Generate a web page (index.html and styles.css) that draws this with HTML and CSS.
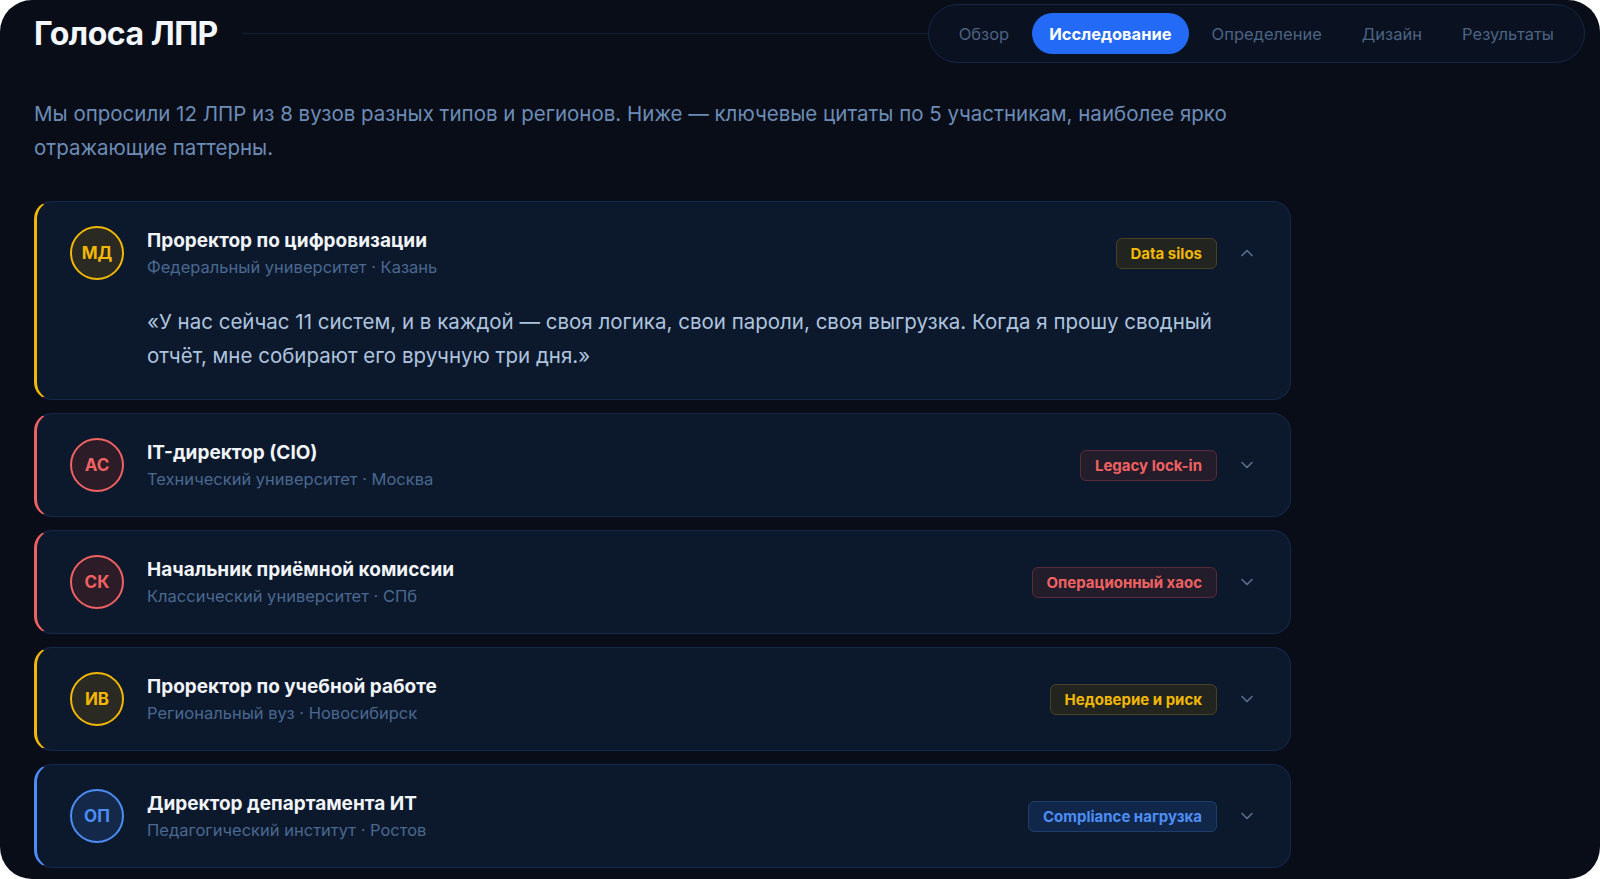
FILE: index.html
```html
<!DOCTYPE html>
<html lang="ru">
<head>
<meta charset="utf-8">
<title>Голоса ЛПР</title>
<link rel="stylesheet" href="styles.css">
</head>
<body>
<div class="frame">
  <header class="topbar">
    <h1 class="title">Голоса ЛПР</h1>
    <div class="rule"></div>
    <nav class="tabs">
      <a class="tab">Обзор</a>
      <a class="tab active">Исследование</a>
      <a class="tab">Определение</a>
      <a class="tab">Дизайн</a>
      <a class="tab">Результаты</a>
    </nav>
  </header>

  <main class="voices">
    <p class="intro">Мы опросили 12 ЛПР из 8 вузов разных типов и регионов. Ниже — ключевые цитаты по 5 участникам, наиболее ярко отражающие паттерны.</p>

    <section class="card amber open">
      <div class="card-head">
        <div class="avatar">МД</div>
        <div class="who">
          <div class="role">Проректор по цифровизации</div>
          <div class="org">Федеральный университет · Казань</div>
        </div>
        <span class="tag">Data silos</span>
        <svg class="chev" viewBox="0 0 16 16"><path d="M3 10.5 8 5.5l5 5"/></svg>
      </div>
      <blockquote class="quote">«У нас сейчас 11 систем, и в каждой — своя логика, свои пароли, своя выгрузка. Когда я прошу сводный отчёт, мне собирают его вручную три дня.»</blockquote>
    </section>

    <section class="card red">
      <div class="card-head">
        <div class="avatar">АС</div>
        <div class="who">
          <div class="role">IT-директор (CIO)</div>
          <div class="org">Технический университет · Москва</div>
        </div>
        <span class="tag">Legacy lock-in</span>
        <svg class="chev" viewBox="0 0 16 16"><path d="M3 5.5 8 10.5l5-5"/></svg>
      </div>
    </section>

    <section class="card red">
      <div class="card-head">
        <div class="avatar">СК</div>
        <div class="who">
          <div class="role">Начальник приёмной комиссии</div>
          <div class="org">Классический университет · СПб</div>
        </div>
        <span class="tag">Операционный хаос</span>
        <svg class="chev" viewBox="0 0 16 16"><path d="M3 5.5 8 10.5l5-5"/></svg>
      </div>
    </section>

    <section class="card amber">
      <div class="card-head">
        <div class="avatar">ИВ</div>
        <div class="who">
          <div class="role">Проректор по учебной работе</div>
          <div class="org">Региональный вуз · Новосибирск</div>
        </div>
        <span class="tag">Недоверие и риск</span>
        <svg class="chev" viewBox="0 0 16 16"><path d="M3 5.5 8 10.5l5-5"/></svg>
      </div>
    </section>

    <section class="card blue">
      <div class="card-head">
        <div class="avatar">ОП</div>
        <div class="who">
          <div class="role">Директор департамента ИТ</div>
          <div class="org">Педагогический институт · Ростов</div>
        </div>
        <span class="tag">Compliance нагрузка</span>
        <svg class="chev" viewBox="0 0 16 16"><path d="M3 5.5 8 10.5l5-5"/></svg>
      </div>
    </section>
  </main>
</div>
</body>
</html>
```

FILE: styles.css
```css
html, body {
  margin: 0;
  padding: 0;
  background: #ffffff;
}

body {
  font-family: Inter, "Noto Sans", "Liberation Sans", sans-serif;
  -webkit-font-smoothing: antialiased;
}

.frame {
  width: 1600px;
  height: 879px;
  box-sizing: border-box;
  background: #080d18;
  border-radius: 32px;
  overflow: hidden;
  padding: 4px 15px 0 34px;
}

/* top bar: title, connecting rule, tab pills */
.topbar {
  display: flex;
  align-items: center;
  height: 59px;
}

.title {
  margin: 0;
  font-size: 32px;
  font-weight: 700;
  letter-spacing: -0.015em;
  color: #f3f6fb;
  white-space: nowrap;
}

.rule {
  flex: 1;
  height: 1px;
  margin: 0 0 0 24px;
  background: #122038;
}

.tabs {
  display: flex;
  align-items: center;
  gap: 6px;
  height: 59px;
  box-sizing: border-box;
  padding: 0 13px 0 13px;
  border: 1px solid #142848;
  border-radius: 30px;
  background: #0a1120;
}

.tab {
  display: flex;
  align-items: center;
  height: 41px;
  padding: 0 17px;
  border-radius: 21px;
  font-size: 16.5px;
  color: #4c6383;
  white-space: nowrap;
}

.tab.active {
  background: #236bf6;
  color: #ffffff;
  font-weight: 700;
}

/* intro + voice cards */
.voices {
  width: 1257px;
}

.intro {
  margin: 34px 0 36px;
  font-size: 20.5px;
  line-height: 34px;
  color: #6c8cb6;
}

.card {
  --accent: #f2b705;
  --tag-bg: #22251f;
  --tag-border: #4a4122;
  --av-bg: #2a2a22;
  background: #0c192c;
  border: 1px solid #15284a;
  border-left: 3px solid var(--accent);
  border-radius: 18px;
  margin-bottom: 13px;
  padding: 24px 35px 24px 33px;
}

.card.red {
  --accent: #f06262;
  --tag-bg: #231c2a;
  --tag-border: #5a2a36;
  --av-bg: #2b1c27;
}

.card.blue {
  --accent: #4c8ef6;
  --tag-bg: #11274a;
  --tag-border: #1f3e6c;
  --av-bg: #142849;
}

.card.open {
  padding-bottom: 26px;
}

.card-head {
  display: flex;
  align-items: center;
}

.avatar {
  width: 54px;
  height: 54px;
  box-sizing: border-box;
  flex: none;
  display: flex;
  align-items: center;
  justify-content: center;
  border: 2px solid var(--accent);
  border-radius: 50%;
  background: var(--av-bg);
  color: var(--accent);
  font-size: 17px;
  font-weight: 700;
}

.who {
  flex: 1;
  margin-left: 23px;
}

.role {
  font-size: 19px;
  font-weight: 700;
  color: #f1f4f9;
  line-height: 24px;
}

.org {
  margin-top: 3px;
  font-size: 16.5px;
  color: #4a6890;
  line-height: 22px;
}

.tag {
  display: inline-flex;
  align-items: center;
  height: 31px;
  box-sizing: border-box;
  padding: 0 14px;
  border: 1px solid var(--tag-border);
  border-radius: 6px;
  background: var(--tag-bg);
  color: var(--accent);
  font-size: 15px;
  font-weight: 700;
  white-space: nowrap;
}

.chev {
  width: 16px;
  height: 16px;
  flex: none;
  margin-left: 22px;
  fill: none;
  stroke: #59708f;
  stroke-width: 1.6;
  stroke-linecap: round;
  stroke-linejoin: round;
}

.quote {
  margin: 25px 0 0 77px;
  font-size: 20.5px;
  line-height: 34px;
  color: #aec4df;
}
```
